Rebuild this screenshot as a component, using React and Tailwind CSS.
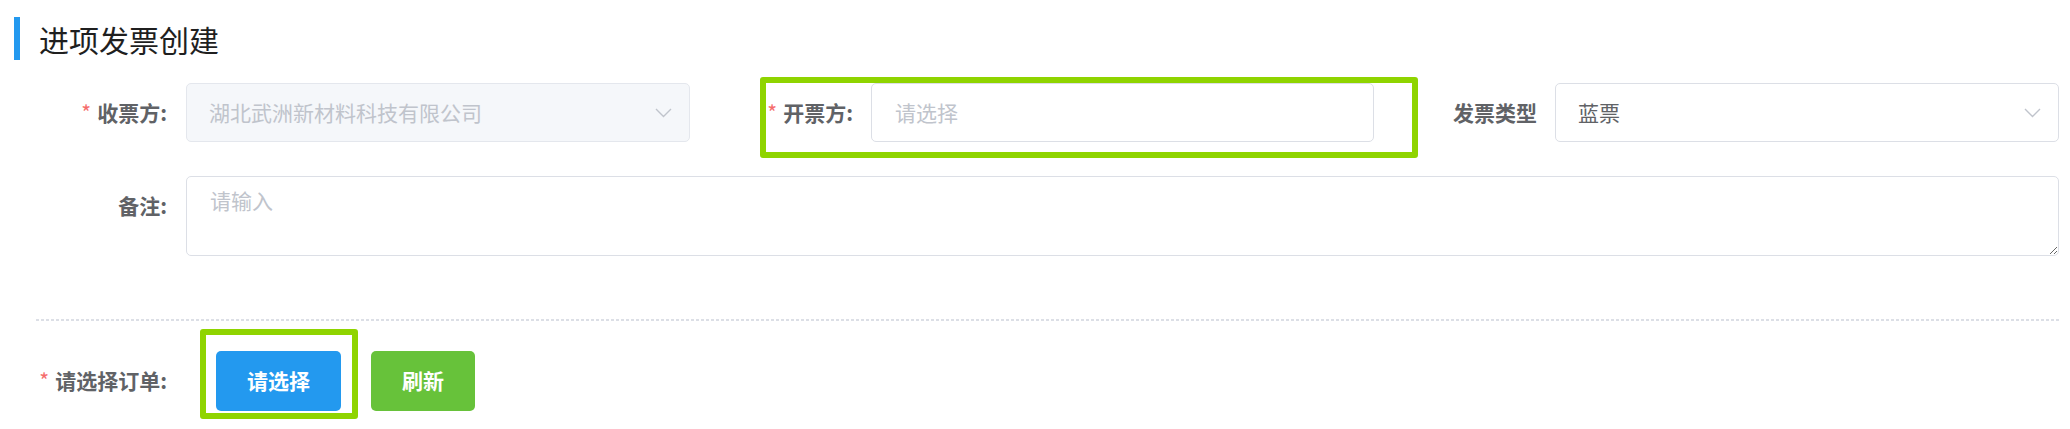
import React from 'react'

const Chevron = () => (
  <svg width="17" height="10" viewBox="0 0 17 10" fill="none">
    <path d="M1 1 L8.5 8.5 L16 1" stroke="#c0c4cc" strokeWidth="1.4" />
  </svg>
)

const Label = ({ text, required, className = '' }) => (
  <div className={`flex items-center justify-end h-[59px] whitespace-nowrap text-[21px] font-bold text-[#606266] ${className}`}>
    {required && <span className="text-[#f56c6c] mr-[6px] font-normal">*</span>}
    {text}
  </div>
)

const SelectBox = ({ value, disabled, placeholder }) => (
  <div
    className={
      disabled
        ? 'w-[504px] h-[59px] flex items-center justify-between pl-[22px] pr-[17px] border border-[#e4e7ed] bg-[#f5f7fa] rounded-[5px] text-[21px] text-[#c0c4cc]'
        : 'w-[504px] h-[59px] flex items-center justify-between pl-[22px] pr-[17px] border border-[#dcdfe6] bg-white rounded-[5px] text-[21px] text-[#606266]'
    }
  >
    <span className={value ? '' : 'text-[#c0c4cc]'}>{value || placeholder}</span>
    <Chevron />
  </div>
)

export default function App() {
  return (
    <div className="w-[2070px] h-[429px] bg-white font-['Noto_Sans_CJK_SC',sans-serif] overflow-hidden">
      {/* title */}
      <div className="flex items-center pt-[17px] pl-[14px]">
        <div className="w-[6px] h-[43px] bg-[#2399ef]" />
        <h2 className="ml-[19px] text-[30px] leading-none text-[#1f1f1f]">进项发票创建</h2>
      </div>

      <div className="pl-[36px] pr-[11px]">
        {/* row 1 */}
        <div className="flex items-start mt-[17px]">
          <div className="flex mt-[6px]">
            <Label text="收票方:" required className="w-[150px] pr-[19px]" />
            <SelectBox value="湖北武洲新材料科技有限公司" disabled />
          </div>

          <div className="ml-[70px] border-[6px] border-[#8fd400] rounded-[3px] flex pr-[38px] pb-[10px]">
            <Label text="开票方:" required className="w-[105px] pr-[18px]" />
            <div className="w-[503px] h-[59px] flex items-center pl-[23px] border border-[#dcdfe6] rounded-[5px] text-[21px] text-[#c0c4cc]">
              请选择
            </div>
          </div>

          <div className="flex mt-[6px]">
            <Label text="发票类型" className="w-[137px] pr-[18px]" />
            <SelectBox value="蓝票" />
          </div>
        </div>

        {/* row 2 */}
        <div className="flex items-start mt-[18px]">
          <Label text="备注:" className="w-[150px] pr-[19px]" />
          <textarea
            placeholder="请输入"
            className="w-[1873px] h-[80px] border border-[#dcdfe6] rounded-[5px] px-[23px] pt-[8px] text-[21px] leading-[1.5] text-[#606266] placeholder:text-[#c0c4cc] outline-none"
          />
        </div>

        {/* divider */}
        <div className="mt-[63px] h-[2px] bg-[linear-gradient(to_right,#dcdfe6_60%,transparent_60%)] bg-[length:5px_2px] bg-repeat-x" />

        {/* row 3 */}
        <div className="flex items-start mt-[8px]">
          <div className="mt-[22px] h-[60px] w-[131px] flex items-center justify-end whitespace-nowrap text-[21px] font-bold text-[#606266]">
            <span className="text-[#f56c6c] mr-[6px] font-normal">*</span>
            请选择订单:
          </div>
          <div className="ml-[33px] border-[6px] border-[#8fd400] rounded-[3px] pl-[10px] pr-[11px] pt-[16px] pb-[2px]">
            <button className="w-[125px] h-[60px] bg-[#2399ef] rounded-[5px] text-white text-[21px] font-bold">
              请选择
            </button>
          </div>
          <button className="ml-[13px] mt-[22px] w-[104px] h-[60px] bg-[#67c23a] rounded-[5px] text-white text-[21px] font-bold">
            刷新
          </button>
        </div>
      </div>
    </div>
  )
}
